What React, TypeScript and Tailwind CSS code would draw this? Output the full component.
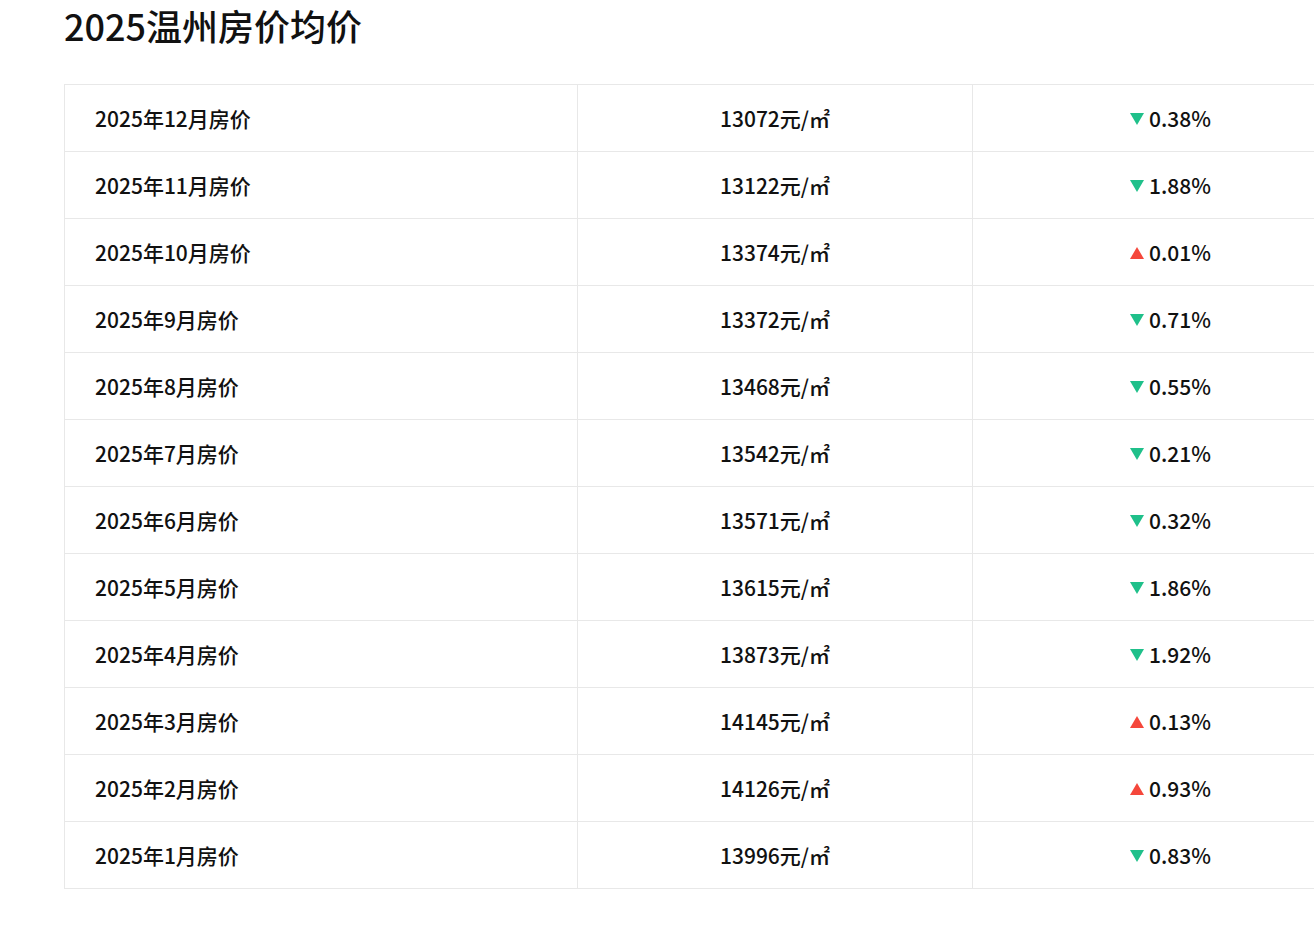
import React from "react"

type Row = { month: string; price: number; change: string; up: boolean }

const rows: Row[] = [
  { month: "2025年12月房价", price: 13072, change: "0.38%", up: false },
  { month: "2025年11月房价", price: 13122, change: "1.88%", up: false },
  { month: "2025年10月房价", price: 13374, change: "0.01%", up: true },
  { month: "2025年9月房价", price: 13372, change: "0.71%", up: false },
  { month: "2025年8月房价", price: 13468, change: "0.55%", up: false },
  { month: "2025年7月房价", price: 13542, change: "0.21%", up: false },
  { month: "2025年6月房价", price: 13571, change: "0.32%", up: false },
  { month: "2025年5月房价", price: 13615, change: "1.86%", up: false },
  { month: "2025年4月房价", price: 13873, change: "1.92%", up: false },
  { month: "2025年3月房价", price: 14145, change: "0.13%", up: true },
  { month: "2025年2月房价", price: 14126, change: "0.93%", up: true },
  { month: "2025年1月房价", price: 13996, change: "0.83%", up: false },
]

function Arrow({ up }: { up: boolean }) {
  return (
    <svg width="14" height="12" viewBox="0 0 14 12" className="mr-[5px] shrink-0">
      {up ? (
        <polygon points="7,0 14,12 0,12" fill="#f5473b" />
      ) : (
        <polygon points="0,0 14,0 7,12" fill="#1fc08a" />
      )}
    </svg>
  )
}

export default function App() {
  return (
    <div
      className="min-h-screen w-full overflow-hidden bg-white text-[#111]"
      style={{ fontFamily: '"Noto Sans CJK SC", "Noto Sans", sans-serif' }}
    >
      <div className="pl-16 pt-[1px]">
        {/* TITLE */}
        <h1 className="text-[36px] leading-[48px] font-medium">2025温州房价均价</h1>

        {/* TABLE */}
        <table className="mt-[35px] w-[1304px] border-collapse table-fixed">
          <colgroup>
            <col className="w-[513px]" />
            <col className="w-[395px]" />
            <col className="w-[396px]" />
          </colgroup>
          <tbody>
            {rows.map((r) => (
              <tr key={r.month} className="h-[67px]">
                <td className="border border-[#e8e8e8] pl-[30px] pt-[2px] text-[21px] font-medium">
                  {r.month}
                </td>
                <td className="border border-[#e8e8e8] pt-[2px] text-center text-[21px] font-medium">
                  {r.price}元/㎡
                </td>
                <td className="border border-[#e8e8e8] pt-[2px] text-[21px] font-medium">
                  <div className="flex items-center justify-center">
                    <Arrow up={r.up} />
                    <span>{r.change}</span>
                  </div>
                </td>
              </tr>
            ))}
          </tbody>
        </table>
      </div>
    </div>
  )
}
